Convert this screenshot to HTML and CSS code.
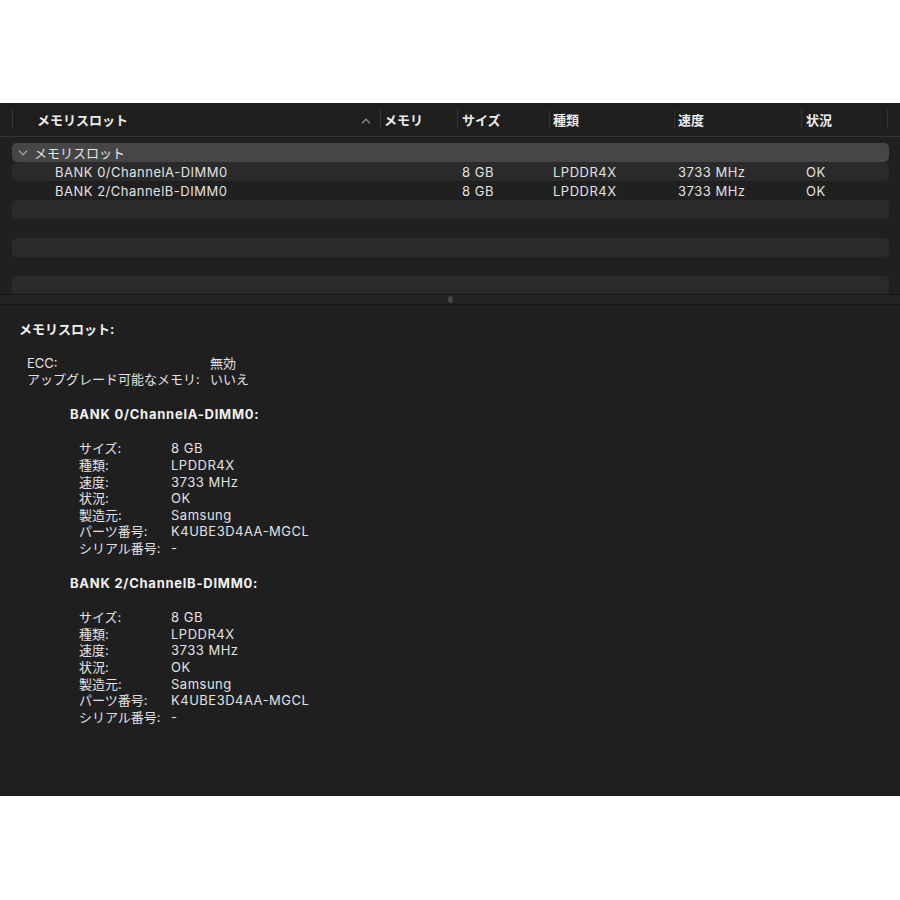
FILE: index.html
```html
<!DOCTYPE html>
<html lang="ja">
<head>
<meta charset="UTF-8">
<meta name="viewport" content="width=device-width, initial-scale=1.0">
<title>メモリスロット</title>
<link rel="stylesheet" href="styles.css">
</head>
<body>

<div class="window">
  <div class="table-pane">
    <div class="table-head">
      <div class="th th-first">
        <span>メモリスロット</span>
        <svg class="sort" width="10" height="6" viewBox="0 0 10 6"><path d="M1 5.2 L5 1.2 L9 5.2" fill="none" stroke="#8a8a8a" stroke-width="1.3"/></svg>
      </div>
      <div class="th">メモリ</div>
      <div class="th">サイズ</div>
      <div class="th">種類</div>
      <div class="th">速度</div>
      <div class="th th-last">状況</div>
    </div>

    <div class="rows">
      <div class="row group">
        <div class="td td-first">
          <svg class="chev" width="10" height="6" viewBox="0 0 10 6"><path d="M1 0.8 L5 4.8 L9 0.8" fill="none" stroke="#a0a0a0" stroke-width="1.3"/></svg>
          <span class="jp">メモリスロット</span>
        </div>
        <div class="td"></div>
        <div class="td"></div>
        <div class="td"></div>
        <div class="td"></div>
        <div class="td"></div>
      </div>
      <div class="row stripe">
        <div class="td td-child">BANK 0/ChannelA-DIMM0</div>
        <div class="td"></div>
        <div class="td">8 GB</div>
        <div class="td">LPDDR4X</div>
        <div class="td">3733 MHz</div>
        <div class="td">OK</div>
      </div>
      <div class="row">
        <div class="td td-child">BANK 2/ChannelB-DIMM0</div>
        <div class="td"></div>
        <div class="td">8 GB</div>
        <div class="td">LPDDR4X</div>
        <div class="td">3733 MHz</div>
        <div class="td">OK</div>
      </div>
      <div class="row stripe"></div>
      <div class="row"></div>
      <div class="row stripe"></div>
      <div class="row"></div>
      <div class="row stripe"></div>
    </div>
  </div>

  <div class="splitter"><span class="handle"></span></div>

  <div class="detail">
    <p class="title">メモリスロット:</p>

    <div class="props top-props">
      <span>ECC:</span><span>無効</span>
      <span>アップグレード可能なメモリ:</span><span>いいえ</span>
    </div>

    <p class="bank">BANK 0/ChannelA-DIMM0:</p>
    <div class="props bank-props">
      <span>サイズ:</span><span>8 GB</span>
      <span>種類:</span><span>LPDDR4X</span>
      <span>速度:</span><span>3733 MHz</span>
      <span>状況:</span><span>OK</span>
      <span>製造元:</span><span>Samsung</span>
      <span>パーツ番号:</span><span>K4UBE3D4AA-MGCL</span>
      <span>シリアル番号:</span><span>-</span>
    </div>

    <p class="bank">BANK 2/ChannelB-DIMM0:</p>
    <div class="props bank-props">
      <span>サイズ:</span><span>8 GB</span>
      <span>種類:</span><span>LPDDR4X</span>
      <span>速度:</span><span>3733 MHz</span>
      <span>状況:</span><span>OK</span>
      <span>製造元:</span><span>Samsung</span>
      <span>パーツ番号:</span><span>K4UBE3D4AA-MGCL</span>
      <span>シリアル番号:</span><span>-</span>
    </div>
  </div>
</div>

</body>
</html>
```

FILE: styles.css
```css
  body {
    margin: 0;
    background: #ffffff;
    font-family: "Inter", "Noto Sans CJK JP", sans-serif;
    font-size: 13px;
    color: #e2e2e2;
  }

  .window {
    margin-top: 103px;
    height: 693px;
    background: #1f1f1f;
    display: flex;
    flex-direction: column;
  }

  .table-pane {
    height: 191px;
    overflow: hidden;
    background: #202020;
  }

  .table-head {
    height: 33px;
    display: grid;
    grid-template-columns: 368px 77px 92px 125px 127px 87px;
    padding-left: 12px;
    background: #1e1e1c;
    border-bottom: 1px solid #343432;
  }

  .th {
    display: flex;
    align-items: center;
    padding-left: 3px;
    font-weight: bold;
    color: #ececec;
    border-left: 1px solid #353535;
    margin: 7px 0;
  }

  .th:nth-child(3), .th:nth-child(6) {
    padding-left: 4px;
  }

  .th-first {
    padding-left: 24px;
    justify-content: space-between;
    padding-right: 9px;
  }

  .th-last {
    border-right: 1px solid #353535;
  }

  .sort {
    margin-top: 2px;
  }

  .rows {
    padding: 6px 11px 0 12px;
  }

  .row {
    height: 19px;
    display: grid;
    grid-template-columns: 368px 77px 92px 125px 127px 87px;
    border-radius: 5px;
    line-height: 20px;
  }

  .row.stripe {
    background: #2a2a2a;
  }

  .row.group {
    background: #464646;
    color: #e6e6e6;
  }

  .td {
    padding-left: 4px;
    white-space: nowrap;
    letter-spacing: 0.5px;
  }

  .td:nth-child(3), .td:nth-child(6) {
    padding-left: 5px;
  }

  .td-first {
    padding-left: 6px;
    display: flex;
    align-items: center;
    gap: 6px;
  }

  .jp {
    letter-spacing: 0;
  }

  .td-child {
    padding-left: 43px;
  }

  .splitter {
    height: 9px;
    border-top: 1px solid #161616;
    border-bottom: 1px solid #161616;
    background: #232323;
    display: flex;
    justify-content: center;
    align-items: center;
  }

  .handle {
    width: 5px;
    height: 7px;
    border-radius: 3px;
    background: #454545;
  }

  .detail {
    flex: 1;
    padding: 16px 19px;
    line-height: 16.6px;
    background: #1f1f1f;
  }

  .detail p {
    margin: 0;
  }

  .title {
    font-weight: bold;
    color: #f2f2f2;
  }

  .props {
    display: grid;
    white-space: nowrap;
  }

  .props span:nth-child(even) {
    letter-spacing: 0.5px;
  }

  .top-props {
    grid-template-columns: 183px auto;
    margin: 17px 0 0 8px;
    justify-content: start;
  }

  .top-props span:nth-child(even) {
    letter-spacing: 0;
  }

  .bank {
    font-weight: bold;
    letter-spacing: 0.75px;
    color: #f2f2f2;
    margin: 18px 0 0 51px !important;
  }

  .bank-props {
    grid-template-columns: 92px auto;
    justify-content: start;
    margin: 18px 0 17px 60px;
  }
```
